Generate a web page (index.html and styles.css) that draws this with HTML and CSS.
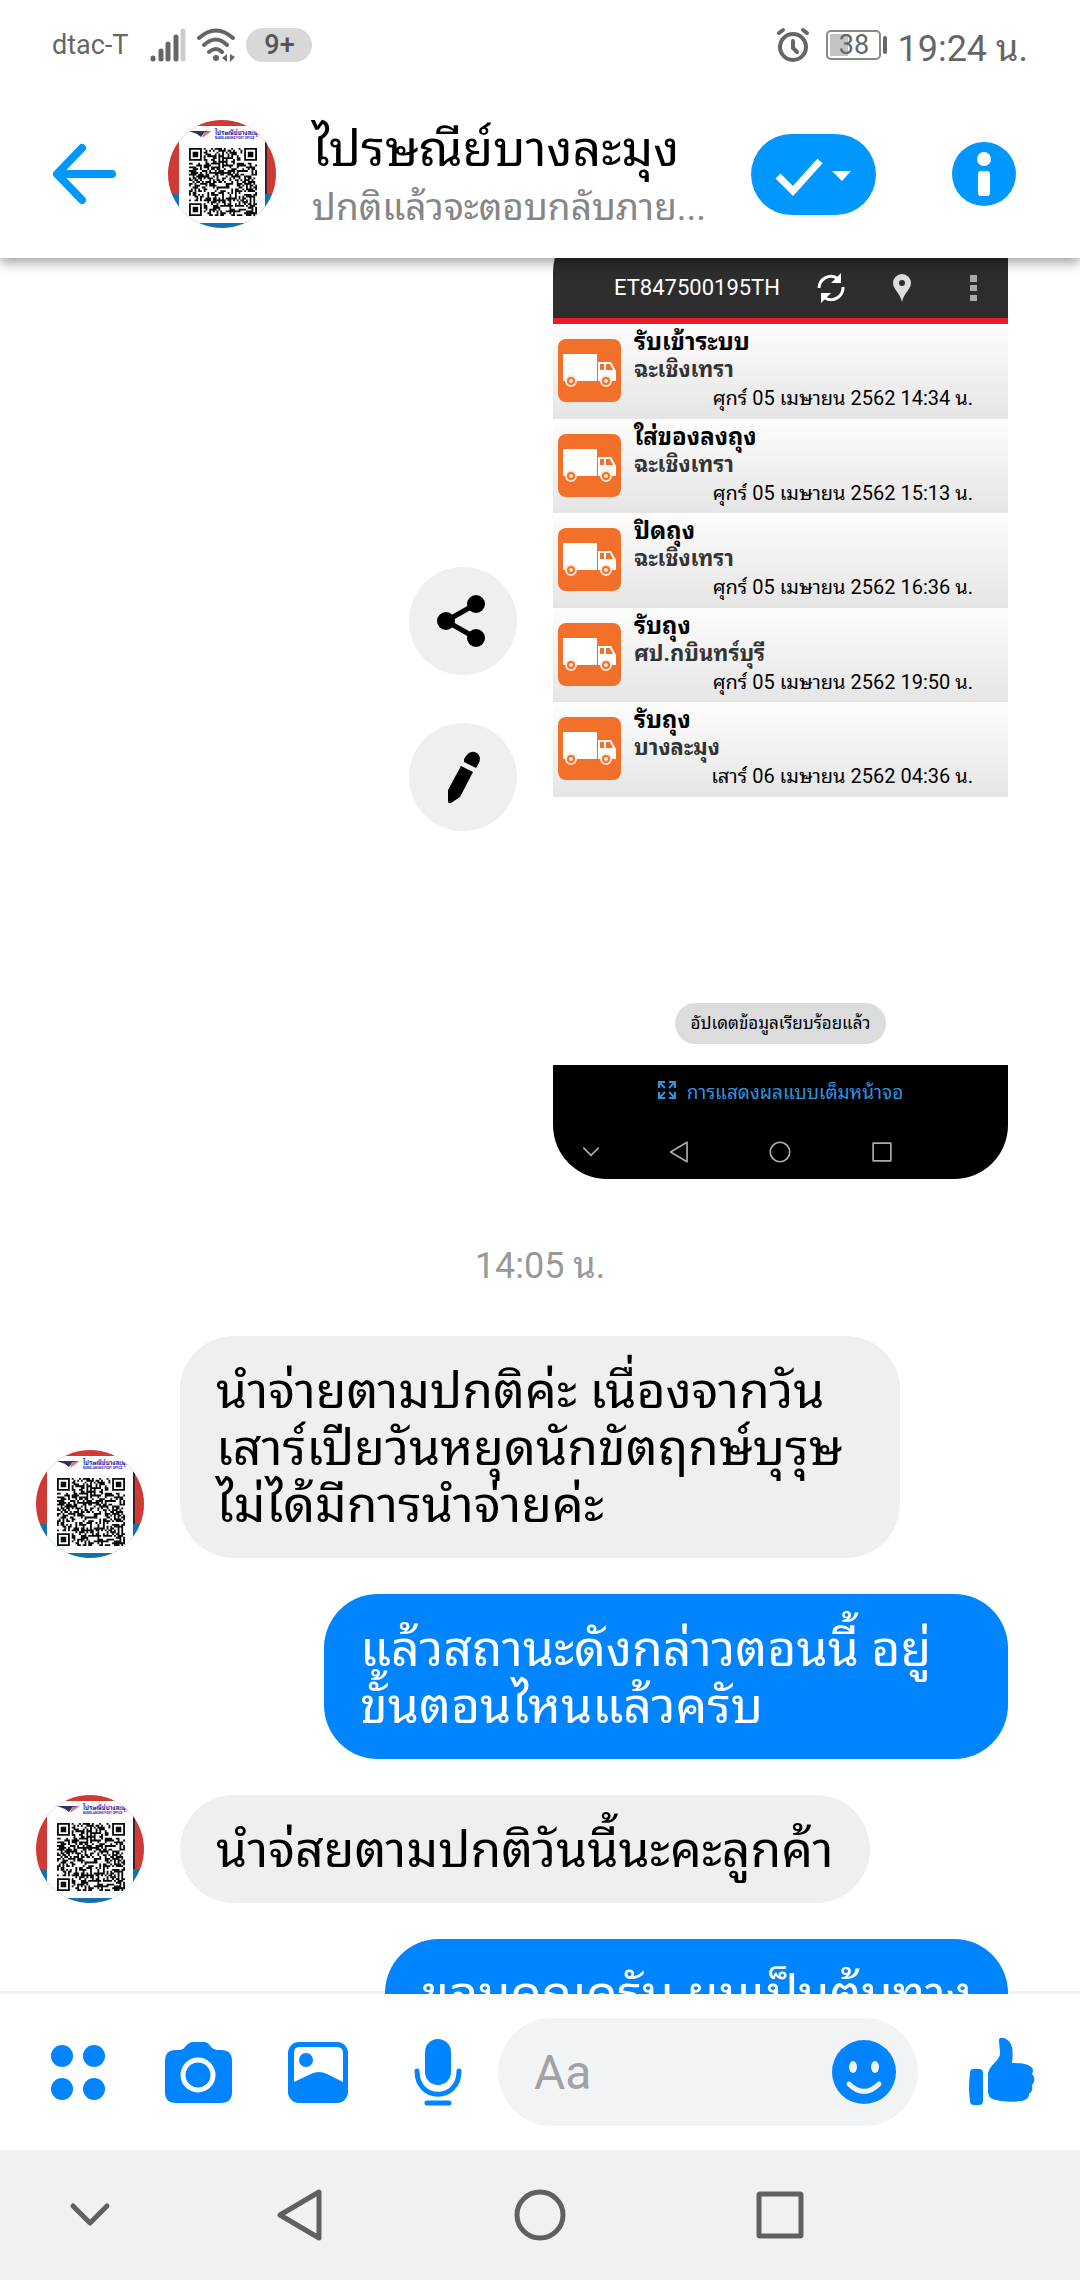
FILE: index.html
```html
<!DOCTYPE html>
<html lang="th">
<head>
    <meta charset="UTF-8">
    <meta name="viewport" content="width=device-width, initial-scale=1.0">
    <title>ไปรษณีย์บางละมุง</title>
    <link rel="stylesheet" href="styles.css">
</head>
<body>
    <svg class="defs" aria-hidden="true">
        <symbol id="avatar" viewBox="0 0 108 108">
            <rect width="108" height="74" fill="#d03a34"/>
            <rect y="74" width="108" height="34" fill="#176fae"/>
            <rect x="97" y="20" width="2" height="54" fill="#3a1f2c"/>
            <rect x="11" y="6" width="86" height="97" fill="#fff"/>
            <path d="M21 11h22l-7 2-3 4-4-3z" fill="#2b3270"/>
            <path d="M36 12l8-1-10 7z" fill="#d77b80"/>
            <text x="47" y="15" class="logo-th">ไปรษณีย์บางละมุง</text>
            <text x="47" y="19" class="logo-en">BANGLAMUNG POST OFFICE</text>
            <svg x="21" y="28" width="68" height="68" viewBox="0 0 37 37">
                <path id="qr" fill="#0a0a0a"/>
            </svg>
        </symbol>
        <symbol id="truck" viewBox="0 0 63 63">
            <rect width="63" height="63" rx="8" fill="#f3702a"/>
            <rect x="5" y="15" width="34" height="27" rx="1" fill="#fff"/>
            <path d="M40 23h13l5 9v10H40z" fill="#fff"/>
            <path d="M42 25h4v6h-4zM48 25h4l3 6h-7z" fill="#f3702a"/>
            <g fill="#f3702a" stroke="#ffe6d6" stroke-width="2">
                <circle cx="13" cy="42" r="5"/>
                <circle cx="48" cy="42" r="5"/>
            </g>
            <g fill="#ffe6d6">
                <circle cx="13" cy="42" r="2"/>
                <circle cx="48" cy="42" r="2"/>
            </g>
        </symbol>
        <symbol id="nav-down" viewBox="0 0 52 52"><path d="M9 17l17 17 17-17"/></symbol>
        <symbol id="nav-back" viewBox="0 0 52 52"><path d="M45 3v46L6 26z"/></symbol>
        <symbol id="nav-home" viewBox="0 0 52 52"><circle cx="26" cy="26" r="23"/></symbol>
        <symbol id="nav-recent" viewBox="0 0 52 52"><rect x="5" y="5" width="42" height="42" rx="1"/></symbol>
    </svg>

    <div class="app">
        <div class="status-bar">
            <span class="carrier">dtac-T</span>
            <svg class="signal" viewBox="0 0 36 36">
                <g stroke="#666" stroke-width="5" stroke-linecap="round">
                    <path d="M3 31v1M11 24v8M18 17v15M26 10v22"/>
                    <path d="M33 4v28" stroke="#ccc"/>
                </g>
            </svg>
            <svg class="wifi" viewBox="0 0 40 36">
                <g fill="none" stroke="#666" stroke-width="4" stroke-linecap="round">
                    <path d="M3 11Q20-4 37 11M8 18Q20 7 31 18M13 25Q20 19 26 25"/>
                </g>
                <circle cx="20" cy="31" r="3" fill="#666"/>
                <path d="M31 27v8l-5-4zM34 27l5 3-5 5z" fill="#666"/>
            </svg>
            <span class="count">9+</span>
            <span class="spacer"></span>
            <svg class="alarm" viewBox="0 0 34 36">
                <g fill="none" stroke="#666" stroke-width="4" stroke-linecap="round">
                    <circle cx="17" cy="20" r="13"/>
                    <path d="M17 14v7l4 4M3 6l4-3M31 6l-4-3"/>
                </g>
            </svg>
            <span class="battery">38</span>
            <span class="clock">19:24 น.</span>
        </div>

        <header class="chat-header">
            <button class="back" aria-label="กลับ">
                <svg viewBox="0 0 64 64" fill="none" stroke="#0097ff" stroke-width="8" stroke-linecap="round" stroke-linejoin="round">
                    <path d="M30 6L5 32l25 26M5 32h55"/>
                </svg>
            </button>
            <svg class="avatar"><use href="#avatar"/></svg>
            <div class="who">
                <h1>ไปรษณีย์บางละมุง</h1>
                <p>ปกติแล้วจะตอบกลับภาย...</p>
            </div>
            <button class="done" aria-label="เสร็จสิ้น">
                <svg viewBox="0 0 125 81">
                    <path d="M27 42l15 15 27-30" fill="none" stroke="#fff" stroke-width="7"/>
                    <path d="M81 37h19l-9 10z" fill="#fff"/>
                </svg>
            </button>
            <button class="info" aria-label="ข้อมูล">
                <svg viewBox="0 0 64 64">
                    <circle cx="32" cy="32" r="32" fill="#0097ff"/>
                    <circle cx="32" cy="17" r="7" fill="#fff"/>
                    <rect x="26" y="29" width="12" height="25" rx="3" fill="#fff"/>
                </svg>
            </button>
        </header>

        <main class="chat">
            <div class="photo-row">
                <div class="photo-actions">
                    <button aria-label="แชร์">
                        <svg viewBox="0 0 54 54">
                            <path d="M40 10L10 27l30 17" fill="none" stroke="#000" stroke-width="5"/>
                            <circle cx="40" cy="10" r="9"/>
                            <circle cx="10" cy="27" r="9"/>
                            <circle cx="40" cy="44" r="9"/>
                        </svg>
                    </button>
                    <button aria-label="แก้ไข">
                        <svg viewBox="0 0 54 54">
                            <path d="M28 9q5-9 11-7 7 3 4 11l-3 5-12-6z"/>
                            <path d="M25 16l12 6-13 25-9 6q-3 1-3-2V40z"/>
                        </svg>
                    </button>
                </div>
                <div class="photo">
                    <div class="track-bar">
                        <span class="track-no">ET847500195TH</span>
                        <svg viewBox="0 0 30 30">
                            <path d="M3 15A12 12 0 0 1 21 5M27 14A12 12 0 0 1 9 25" fill="none" stroke="#fff" stroke-width="3"/>
                            <path d="M25 0v10H15zM5 30V20h10z" fill="#fff"/>
                        </svg>
                        <svg viewBox="0 0 30 30">
                            <path d="M15 1a9 9 0 0 1 9 9c0 6-7 10-9 19C13 20 6 16 6 10a9 9 0 0 1 9-9z" fill="#ddd"/>
                            <circle cx="15" cy="10" r="3" fill="#2d2d2d"/>
                        </svg>
                        <svg viewBox="0 0 30 30">
                            <path d="M12 2h7v7h-7zM12 12h7v6h-7zM12 22h7v6h-7z" fill="#aaa"/>
                        </svg>
                    </div>
                    <ul class="track-list">
                        <li>
                            <svg><use href="#truck"/></svg>
                            <div><b>รับเข้าระบบ</b><strong>ฉะเชิงเทรา</strong><time>ศุกร์ 05 เมษายน 2562 14:34 น.</time></div>
                        </li>
                        <li>
                            <svg><use href="#truck"/></svg>
                            <div><b>ใส่ของลงถุง</b><strong>ฉะเชิงเทรา</strong><time>ศุกร์ 05 เมษายน 2562 15:13 น.</time></div>
                        </li>
                        <li>
                            <svg><use href="#truck"/></svg>
                            <div><b>ปิดถุง</b><strong>ฉะเชิงเทรา</strong><time>ศุกร์ 05 เมษายน 2562 16:36 น.</time></div>
                        </li>
                        <li>
                            <svg><use href="#truck"/></svg>
                            <div><b>รับถุง</b><strong>ศป.กบินทร์บุรี</strong><time>ศุกร์ 05 เมษายน 2562 19:50 น.</time></div>
                        </li>
                        <li>
                            <svg><use href="#truck"/></svg>
                            <div><b>รับถุง</b><strong>บางละมุง</strong><time>เสาร์ 06 เมษายน 2562 04:36 น.</time></div>
                        </li>
                    </ul>
                    <div class="photo-blank">
                        <span class="toast">อัปเดตข้อมูลเรียบร้อยแล้ว</span>
                    </div>
                    <div class="photo-foot">
                        <div class="fullscreen">
                            <svg viewBox="0 0 18 18" fill="none" stroke="#2f94e0" stroke-width="2">
                                <path d="M1 7V1h6M1 1l6 6M11 1h6v6M17 1l-6 6M1 11v6h6M1 17l6-6M17 11v6h-6M17 17l-6-6"/>
                            </svg>
                            <span>การแสดงผลแบบเต็มหน้าจอ</span>
                        </div>
                        <div class="nav nav-small">
                            <svg><use href="#nav-down"/></svg>
                            <svg><use href="#nav-back"/></svg>
                            <svg><use href="#nav-home"/></svg>
                            <svg><use href="#nav-recent"/></svg>
                        </div>
                    </div>
                </div>
            </div>

            <p class="stamp">14:05 น.</p>

            <div class="msg">
                <svg class="avatar"><use href="#avatar"/></svg>
                <p class="bubble">นำจ่ายตามปกติค่ะ เนื่องจากวันเสาร์เปียวันหยุดนักขัตฤกษ์บุรุษ ไม่ได้มีการนำจ่ายค่ะ</p>
            </div>
            <div class="msg mine">
                <p class="bubble">แล้วสถานะดังกล่าวตอนนี้ อยู่ขั้นตอนไหนแล้วครับ</p>
            </div>
            <div class="msg">
                <svg class="avatar"><use href="#avatar"/></svg>
                <p class="bubble">นำจ่สยตามปกติวันนี้นะคะลูกค้า</p>
            </div>
            <div class="msg mine">
                <p class="bubble">ขอบคุณครับ ผมเป็นต้นทาง</p>
            </div>
        </main>

        <div class="composer">
            <button aria-label="เพิ่มเติม">
                <svg viewBox="0 0 68 68">
                    <circle cx="18" cy="18" r="11"/><circle cx="50" cy="18" r="11"/>
                    <circle cx="18" cy="51" r="11"/><circle cx="50" cy="51" r="11"/>
                </svg>
            </button>
            <button aria-label="กล้อง">
                <svg viewBox="0 0 68 68">
                    <path d="M12 12h4q3 0 5-3 4-5 8-5h11q4 0 7 5 3 3 6 3h4q11 0 11 11v31q0 11-11 11H12Q1 65 1 54V23q0-11 11-11z"/>
                    <circle cx="34" cy="37" r="15" fill="none" stroke="#fff" stroke-width="5"/>
                </svg>
            </button>
            <button aria-label="รูปภาพ">
                <svg viewBox="0 0 68 68">
                    <rect x="4" y="4" width="60" height="61" rx="11"/>
                    <path d="M15 9h38q6 0 6 6v29L43 36q-8-4-16 0L10 44V15q0-6 5-6z" fill="#fff"/>
                    <circle cx="22" cy="22" r="7"/>
                </svg>
            </button>
            <button aria-label="เสียง">
                <svg viewBox="0 0 68 68">
                    <rect x="21" y="1" width="26" height="46" rx="13"/>
                    <path d="M13 33c0 31 42 31 42 0M23 65h22" fill="none" stroke="#0084ff" stroke-width="5" stroke-linecap="round"/>
                </svg>
            </button>
            <div class="field">
                <input type="text" placeholder="Aa" aria-label="ข้อความ">
                <button aria-label="อิโมจิ">
                    <svg viewBox="0 0 64 64">
                        <circle cx="32" cy="32" r="32"/>
                        <g fill="#f1f3f5"><ellipse cx="21" cy="27" rx="4" ry="6"/><ellipse cx="43" cy="27" rx="4" ry="6"/></g>
                        <path d="M17 44q15 15 30 0" fill="none" stroke="#f1f3f5" stroke-width="5" stroke-linecap="round"/>
                    </svg>
                </button>
            </div>
            <button class="like" aria-label="ถูกใจ">
                <svg viewBox="0 0 68 68">
                    <path d="M5 31h6q4 0 4 4v28q0 4-4 4H6q-4 0-4-4-2-14 0-28 0-4 3-4z"/>
                    <path d="M31 2c0-3 4-3 7-1 8 4 7 15 6 24 9 0 16 1 19 4 3 2 2 5 1 7 3 3 3 8 0 11 1 4 0 7-3 9 0 4-3 6-7 7-9 1-18 1-26-1-5-1-8-3-8-9V38c0-11 11-14 12-22 0-5-1-11-1-14z"/>
                </svg>
            </button>
        </div>

        <nav class="nav nav-system">
            <button aria-label="ซ่อน"><svg><use href="#nav-down"/></svg></button>
            <button aria-label="ย้อนกลับ"><svg><use href="#nav-back"/></svg></button>
            <button aria-label="หน้าหลัก"><svg><use href="#nav-home"/></svg></button>
            <button aria-label="ล่าสุด"><svg><use href="#nav-recent"/></svg></button>
        </nav>
    </div>

    <script>
        // QR modules: three finder squares, the rest is filled from a seeded generator
        const size = 37;
        let seed = 2019;
        let d = '';

        function isFinder(x, y) {
            return (x < 8 && y < 8) || (x > size - 9 && y < 8) || (x < 8 && y > size - 9);
        }

        for (let y = 0; y < size; y++) {
            for (let x = 0; x < size; x++) {
                seed = (seed * 16807) % 2147483647;
                if (!isFinder(x, y) && seed % 100 < 52) {
                    d += `M${x} ${y}h1v1h-1z`;
                }
            }
        }
        [[0, 0], [size - 7, 0], [0, size - 7]].forEach(([x, y]) => {
            d += `M${x} ${y}h7v7h-7zM${x + 1} ${y + 1}v5h5v-5zM${x + 2} ${y + 2}h3v3h-3z`;
        });
        document.getElementById('qr').setAttribute('d', d);
    </script>
</body>
</html>
```
FILE: styles.css
```css
* {
    box-sizing: border-box;
}
body {
    margin: 0;
    background-color: #fff;
    color: #000;
    font-family: Roboto, "Droid Sans Thai", "Noto Sans Thai Looped", Loma, Waree, Garuda, "Noto Sans Thai", "Noto Sans", sans-serif;
}
h1, p, ul {
    margin: 0;
    padding: 0;
    font-weight: normal;
}
button {
    display: flex;
    align-items: center;
    justify-content: center;
    padding: 0;
    border: none;
    background: none;
    cursor: pointer;
}
svg {
    display: block;
    flex-shrink: 0;
}
.defs {
    display: none;
}
.app {
    display: flex;
    flex-direction: column;
    height: 100vh;
}

/* status bar */
.status-bar {
    position: relative;
    z-index: 2;
    display: flex;
    align-items: center;
    height: 90px;
    padding: 0 52px;
    background-color: #fff;
    color: #666;
}
.carrier {
    font-size: 27px;
    margin-right: 22px;
}
.signal {
    width: 36px;
    height: 36px;
    margin-right: 10px;
}
.wifi {
    width: 40px;
    height: 36px;
    margin-right: 10px;
}
.count {
    width: 66px;
    border-radius: 17px;
    background-color: #d8d8d8;
    color: #555;
    font-size: 27px;
    font-weight: 500;
    line-height: 34px;
    text-align: center;
}
.spacer {
    flex: 1;
}
.alarm {
    width: 34px;
    height: 36px;
    margin-right: 16px;
}
.battery {
    position: relative;
    width: 55px;
    margin-right: 16px;
    border: 2px solid #888;
    border-radius: 5px;
    background: linear-gradient(to right, #c4c4c4 40%, #fff 40%);
    background-clip: content-box;
    padding: 2px;
    font-size: 27px;
    line-height: 22px;
    text-align: center;
}
.battery::after {
    content: "";
    position: absolute;
    top: 4px;
    right: -8px;
    width: 4px;
    height: 18px;
    border-radius: 2px;
    background-color: #666;
}
.clock {
    font-size: 36px;
}

/* conversation header */
.chat-header {
    position: relative;
    z-index: 1;
    display: flex;
    align-items: center;
    height: 168px;
    padding: 0 64px 0 52px;
    background-color: #fff;
    box-shadow: 0 4px 12px rgba(0, 0, 0, 0.4);
}
.back svg, .info svg {
    width: 64px;
    height: 64px;
}
.avatar {
    width: 108px;
    height: 108px;
    border-radius: 50%;
}
.chat-header .avatar {
    margin: 0 36px 0 52px;
}
.logo-th, .logo-en {
    fill: #2a1fb0;
    font-weight: bold;
}
.logo-th {
    font-size: 6px;
}
.logo-en {
    font-size: 3px;
}
.who {
    flex: 1;
    min-width: 0;
    padding-top: 4px;
    white-space: nowrap;
}
.who h1 {
    font-size: 50px;
    line-height: 64px;
}
.who p {
    color: #868686;
    font-size: 37px;
    line-height: 54px;
}
.done {
    width: 125px;
    height: 81px;
    margin-right: 76px;
    border-radius: 41px;
    background-color: #0097ff;
}
.done svg {
    width: 125px;
    height: 81px;
}

/* messages */
.chat {
    flex: 1;
    min-height: 0;
    overflow: hidden;
    padding: 0 72px 0 36px;
    box-shadow: inset 0 -3px #f1f1f1;
}
.photo-row {
    display: flex;
    justify-content: flex-end;
    align-items: center;
    gap: 36px;
    margin-top: -40px;
}
.photo-actions {
    display: flex;
    flex-direction: column;
    gap: 48px;
}
.photo-actions button {
    width: 108px;
    height: 108px;
    border-radius: 50%;
    background-color: #efefef;
}
.photo-actions svg {
    width: 54px;
    height: 54px;
}
.photo {
    width: 455px;
    overflow: hidden;
    border-radius: 54px 0 54px 54px;
}
.track-bar {
    display: flex;
    align-items: flex-end;
    gap: 41px;
    height: 106px;
    padding: 0 20px 15px 61px;
    border-bottom: 6px solid #ec1c24;
    background-color: #2d2d2d;
}
.track-bar svg {
    width: 30px;
    height: 30px;
}
.track-no {
    flex: 1;
    min-width: 0;
    color: #fff;
    font-size: 22px;
    line-height: 30px;
    white-space: nowrap;
}
.track-list {
    display: flex;
    flex-direction: column;
    height: 473px;
    list-style: none;
}
.track-list li {
    display: flex;
    flex: 1;
    gap: 13px;
    padding: 0 35px 0 5px;
    background: linear-gradient(#fdfdfd, #e5e5e5);
}
.track-list svg {
    width: 63px;
    height: 63px;
    margin-top: 15px;
}
.track-list div {
    display: flex;
    flex: 1;
    flex-direction: column;
    padding-top: 4px;
    font-size: 22px;
    line-height: 28px;
    white-space: nowrap;
}
.track-list b {
    font-size: 24px;
}
.track-list strong {
    color: #333;
}
.track-list time {
    align-self: flex-end;
    font-size: 20px;
}
.photo-blank {
    display: flex;
    align-items: flex-end;
    justify-content: center;
    height: 268px;
    padding-bottom: 21px;
}
.toast {
    padding: 0 16px;
    border-radius: 21px;
    background-color: #dcdcdc;
    font-size: 17px;
    line-height: 41px;
}
.photo-foot {
    height: 114px;
    background-color: #000;
}
.fullscreen {
    display: flex;
    align-items: center;
    justify-content: center;
    gap: 11px;
    height: 50px;
    color: #2f94e0;
    font-size: 19px;
}
.fullscreen svg {
    width: 18px;
    height: 18px;
}
.stamp {
    padding: 51px 0 34px 36px;
    color: #999;
    font-size: 36px;
    line-height: 72px;
    text-align: center;
}
.msg {
    display: flex;
    align-items: flex-end;
    gap: 36px;
    margin-bottom: 36px;
}
.mine {
    justify-content: flex-end;
}
.bubble {
    max-width: 720px;
    padding: 27px 36px 24px;
    border-radius: 54px;
    background-color: #efefef;
    font-size: 50px;
    line-height: 57px;
}
.mine .bubble {
    max-width: 684px;
    background-color: #0084ff;
    color: #fff;
}

/* composer */
.composer {
    display: flex;
    align-items: center;
    height: 156px;
    padding: 0 18px;
}
.composer button {
    width: 120px;
    height: 108px;
}
.composer svg {
    width: 68px;
    height: 68px;
    fill: #0084ff;
}
.field {
    display: flex;
    flex: 1;
    align-items: center;
    min-width: 0;
    height: 108px;
    padding: 0 22px 0 36px;
    border-radius: 54px;
    background-color: #f1f3f5;
}
.field input {
    flex: 1;
    min-width: 0;
    padding: 0;
    border: none;
    outline: none;
    background: none;
    font-family: Roboto, sans-serif;
    font-size: 48px;
}
.field input::placeholder {
    color: #a0a2a4;
}
.composer .field button, .composer .field svg {
    width: 64px;
    height: 64px;
}
.composer .like {
    margin-left: 24px;
}

/* android navigation */
.nav {
    display: grid;
    grid-template-columns: 3fr 4fr 4fr 4fr 3fr;
    align-items: center;
    justify-items: center;
    fill: none;
    stroke-linecap: round;
    stroke-linejoin: round;
}
.nav-system {
    height: 130px;
    background-color: #f1f1f1;
    stroke: #606060;
    stroke-width: 5px;
}
.nav-system svg {
    width: 52px;
    height: 52px;
}
.nav-small {
    height: 74px;
    stroke: #aaa;
    stroke-width: 4px;
}
.nav-small svg {
    width: 22px;
    height: 22px;
}
```
